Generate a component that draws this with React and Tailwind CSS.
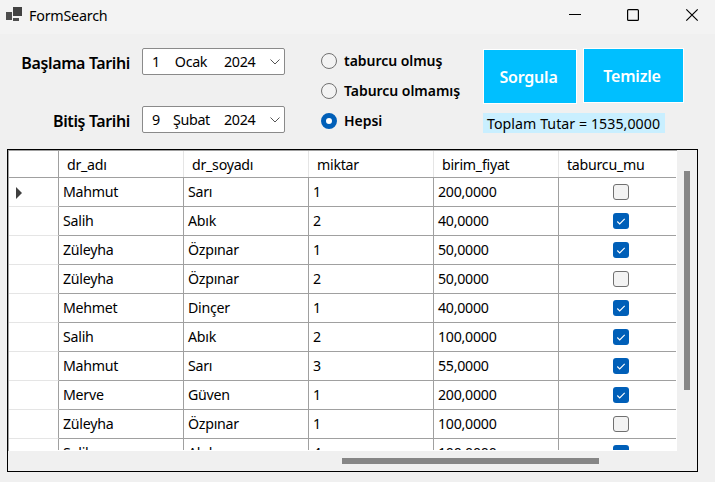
import React from "react";

const rows = [
  ["Mahmut", "Sarı", "1", "200,0000", false],
  ["Salih", "Abık", "2", "40,0000", true],
  ["Züleyha", "Özpınar", "1", "50,0000", true],
  ["Züleyha", "Özpınar", "2", "50,0000", false],
  ["Mehmet", "Dinçer", "1", "40,0000", true],
  ["Salih", "Abık", "2", "100,0000", true],
  ["Mahmut", "Sarı", "3", "55,0000", true],
  ["Merve", "Güven", "1", "200,0000", true],
  ["Züleyha", "Özpınar", "1", "100,0000", false],
  ["Salih", "Abık", "4", "100,0000", true],
];

const columns = ["dr_adı", "dr_soyadı", "miktar", "birim_fiyat"];

function TitleBar() {
  return (
    <header className="flex h-[34px] bg-[#f3f3f3]">
      <svg className="mt-[6px] ml-[6px] h-4 w-4 shrink-0" viewBox="0 0 16 16" shapeRendering="crispEdges">
        <rect x="7" y="1" width="9" height="9" fill="#424242" />
        <rect x="0" y="6" width="6" height="8" fill="#4d4d4d" />
        <rect x="7" y="12" width="6" height="3" fill="#4d4d4d" />
      </svg>
      <h1 className="ml-[7px] text-[14.3px] leading-[32px] tracking-[-0.22px]">FormSearch</h1>
      <svg className="ml-auto h-[31px] w-[146px]" viewBox="0 0 146 31" fill="none" stroke="#000">
        <path d="M0 14.5h12" />
        <rect x="58.6" y="9.6" width="10.8" height="10.8" rx="1" strokeWidth="1.2" />
        <path d="M117.3 9.3l11.4 11.4M128.7 9.3l-11.4 11.4" strokeWidth="1.2" />
      </svg>
    </header>
  );
}

function DatePicker({ day, month, year }) {
  return (
    <div className="flex h-[27px] w-[143px] items-center rounded-[2px] border border-[#8a8a8a] bg-white text-[14.3px] leading-[25px] tracking-[-0.35px]">
      <span className="w-[30px] pl-[9px]">{day}</span>
      <span className="w-[36px] text-center whitespace-nowrap">{month}</span>
      <span className="ml-[15px] w-[34px]">{year}</span>
      <svg className="ml-[12px] h-[6px] w-[10px]" viewBox="0 0 10 6" fill="none" stroke="#555">
        <path d="M.5.5L5 5 9.5.5" />
      </svg>
    </div>
  );
}

function Radio({ label, checked }) {
  return (
    <div className="flex h-[30px] items-center gap-[7px]">
      {checked ? (
        <span className="size-4 shrink-0 rounded-full border-[5px] border-[#005fb8] bg-white" />
      ) : (
        <span className="size-4 shrink-0 rounded-full border border-[#707070] bg-[#f3f3f3]" />
      )}
      <span className="text-[14px] leading-[20px] font-[560] tracking-[-0.04px] whitespace-nowrap">{label}</span>
    </div>
  );
}

function CheckBox({ checked }) {
  if (!checked) {
    return <span className="size-4 rounded-[3px] border border-[#707070] bg-[#f3f3f3]" />;
  }
  return (
    <span className="size-4 rounded-[3px] bg-[#005fb8]">
      <svg viewBox="0 0 16 16" fill="none" stroke="#fff" strokeWidth="1.1">
        <path d="M4.3 8.5l2.4 2.4 5-5" />
      </svg>
    </span>
  );
}

function DataGrid() {
  return (
    <div className="ml-[7px] flex h-[323px] w-[691px] flex-col border border-black">
      <div className="flex h-[301px]">
        <div className="h-full w-[669px] overflow-hidden border-t border-l border-[#a0a0a0] bg-white pr-px pb-px">
          <div className="h-full overflow-hidden text-[14.2px] tracking-[-0.26px]">
            <div className="flex h-[27px] border-b border-[#a0a0a0] leading-[28px]">
              <div className="w-[50px] shrink-0 border-r border-[#a0a0a0]" />
              {columns.map((c) => (
                <div key={c} className="w-[125px] shrink-0 border-r border-[#e5e5e5] pl-[8px]">{c}</div>
              ))}
              <div className="pl-[8px]">taburcu_mu</div>
            </div>
            {rows.map((row, i) => (
              <div key={i} className="flex h-[29px] leading-[28px]">
                <div className="flex w-[50px] shrink-0 items-center border-r border-b border-r-[#a0a0a0] border-b-[#e5e5e5] pl-[7px]">
                  {i === 0 && (
                    <svg className="mt-[2px] h-3 w-[6px]" viewBox="0 0 6 12">
                      <path d="M0 0l6 6-6 6z" fill="#404040" />
                    </svg>
                  )}
                </div>
                {row.slice(0, 4).map((cell, j) => (
                  <div key={j} className="w-[125px] shrink-0 border-r border-b border-[#a0a0a0] pl-[4px]">{cell}</div>
                ))}
                <div className="flex flex-1 items-center border-b border-[#a0a0a0] pl-[54px]">
                  <CheckBox checked={row[4]} />
                </div>
              </div>
            ))}
          </div>
        </div>
        <div className="ml-[7px] mt-[21px] h-[219px] w-[6px] bg-[#868686]" />
      </div>
      <div className="mt-[7px] ml-[334px] h-[6px] w-[257px] bg-[#868686]" />
    </div>
  );
}

export default function App() {
  return (
    <div className="h-[482px] w-[715px] overflow-hidden bg-[#f0f0f0] font-['Noto_Sans','Open_Sans',sans-serif] text-black">
      <TitleBar />
      <section className="flex h-[115px]">
        <div className="w-[130px] pt-[15px] text-right text-[16px] leading-[29px] font-[560] tracking-[-0.38px]">
          <div className="mb-[29px]">Başlama Tarihi</div>
          <div>Bitiş Tarihi</div>
        </div>
        <div className="ml-[12px] flex flex-col gap-[31px] pt-[14px]">
          <DatePicker day="1" month="Ocak" year="2024" />
          <DatePicker day="9" month="Şubat" year="2024" />
        </div>
        <div className="ml-[36px] w-[162px] pt-[12px]">
          <Radio label="taburcu olmuş" />
          <Radio label="Taburcu olmamış" />
          <Radio label="Hepsi" checked />
        </div>
        <div className="pt-[14px]">
          <div className="flex gap-[6px] text-[16px] font-[560] tracking-[-0.2px] text-white">
            <button className="mt-px h-[55px] w-[94px] border border-white bg-[#00bfff] pr-[3px]">Sorgula</button>
            <button className="h-[55px] w-[101px] border border-white bg-[#00bfff] pr-[3px]">Temizle</button>
          </div>
          <div className="mt-[9px] h-[20px] w-[182px] bg-[#c9efff] pl-[4px] text-[14.2px] leading-[21px] tracking-[0.05px] whitespace-nowrap">
            Toplam Tutar = 1535,0000
          </div>
        </div>
      </section>
      <DataGrid />
    </div>
  );
}
